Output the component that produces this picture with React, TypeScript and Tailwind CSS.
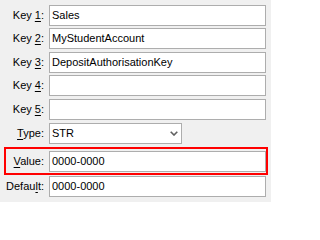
import React from "react";

const font = { fontFamily: '"Liberation Sans", Tahoma, Arial, sans-serif' };

const Label: React.FC<{ pre: string; acc: string; post: string; w?: string }> = ({ pre, acc, post, w = "w-[44px]" }) => (
  <div className={`${w} shrink-0 text-right text-[11px] leading-none text-black whitespace-nowrap`}>
    {pre}
    <span className="underline underline-offset-[2px]">{acc}</span>
    {post}
  </div>
);

const Field: React.FC<{ value?: string }> = ({ value }) => (
  <div className="ml-[5px] flex h-[21px] w-[217px] shrink-0 items-center border border-[#adadad] bg-white pl-[2px] text-[11px] text-black">
    {value}
  </div>
);

const rows = [
  { acc: "1", value: "Sales", mt: "mt-[5px]" },
  { acc: "2", value: "MyStudentAccount", mt: "mt-[2px]" },
  { acc: "3", value: "DepositAuthorisationKey", mt: "mt-[3px]" },
  { acc: "4", value: "", mt: "mt-[2px]" },
  { acc: "5", value: "", mt: "mt-[3px]" },
];

export default function App() {
  return (
    <div className="h-[202px] w-[271px] overflow-hidden bg-[#f0f0f0]" style={font}>
      {rows.map((r) => (
        <div key={r.acc} className={`flex items-center ${r.mt}`}>
          <Label pre="Key " acc={r.acc} post=":" />
          <Field value={r.value} />
        </div>
      ))}

      <div className="mt-[3px] flex items-center">
        <Label pre="" acc="T" post="ype:" />
        <div className="ml-[5px] flex h-[21px] w-[133px] items-center justify-between border border-[#adadad] bg-white pl-[2px] pr-[3px] text-[11px] text-black">
          <span>STR</span>
          <svg width="8" height="5" viewBox="0 0 8 5">
            <path d="M0.7 0.7 L4 4 L7.3 0.7" fill="none" stroke="#606060" strokeWidth="1.6" />
          </svg>
        </div>
      </div>

      <div className="ml-[4px] mt-[3px] flex h-[28px] w-[264px] items-start border-2 border-[#ff0000] pt-[2px]">
        <div className="flex h-[21px] items-center">
          <Label pre="" acc="V" post="alue:" w="w-[38px]" />
          <Field value="0000-0000" />
        </div>
      </div>

      <div className="mt-[1px] flex items-center">
        <Label pre="Defau" acc="l" post="t:" />
        <Field value="0000-0000" />
      </div>
    </div>
  );
}
